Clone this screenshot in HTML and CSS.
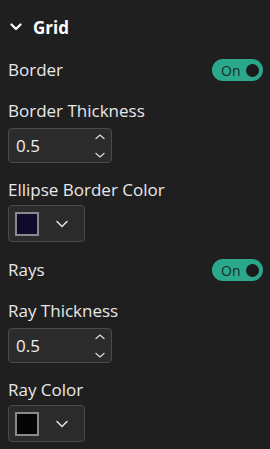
FILE: index.html
```html
<!DOCTYPE html>
<html lang="en">
<head>
    <meta charset="UTF-8">
    <meta name="viewport" content="width=device-width, initial-scale=1.0">
    <title>Grid Settings</title>
    <link rel="stylesheet" href="styles.css">
</head>
<body>

<div id="panel">
    <div class="header">
        <svg class="chevron" width="12" height="8" viewBox="0 0 12 8">
            <path d="M1.5 1.5 L6 6 L10.5 1.5" fill="none" stroke="#fff" stroke-width="2.2" stroke-linecap="round" stroke-linejoin="round"/>
        </svg>
        <span>Grid</span>
    </div>

    <div class="row">
        <span class="label">Border</span>
        <div class="toggle"><span class="state">On</span><i class="knob"></i></div>
    </div>

    <div class="group">
        <div class="label">Border Thickness</div>
        <div class="number">
            <span>0.5</span>
            <svg class="spin" width="12" height="26" viewBox="0 0 12 26">
                <path d="M2 5.5 L6 2 L10 5.5" fill="none" stroke="#d8d8d8" stroke-width="1.3" stroke-linecap="round"/>
                <path d="M2 20.5 L6 24 L10 20.5" fill="none" stroke="#d8d8d8" stroke-width="1.3" stroke-linecap="round"/>
            </svg>
        </div>
    </div>

    <div class="group tight">
        <div class="label">Ellipse Border Color</div>
        <div class="color">
            <i class="swatch navy"></i>
            <svg class="drop" width="12" height="8" viewBox="0 0 12 8">
                <path d="M1 1.5 L6 6.5 L11 1.5" fill="none" stroke="#e8e8e8" stroke-width="1.5" stroke-linecap="round"/>
            </svg>
        </div>
    </div>

    <div class="row">
        <span class="label">Rays</span>
        <div class="toggle"><span class="state">On</span><i class="knob"></i></div>
    </div>

    <div class="group">
        <div class="label">Ray Thickness</div>
        <div class="number">
            <span>0.5</span>
            <svg class="spin" width="12" height="26" viewBox="0 0 12 26">
                <path d="M2 5.5 L6 2 L10 5.5" fill="none" stroke="#d8d8d8" stroke-width="1.3" stroke-linecap="round"/>
                <path d="M2 20.5 L6 24 L10 20.5" fill="none" stroke="#d8d8d8" stroke-width="1.3" stroke-linecap="round"/>
            </svg>
        </div>
    </div>

    <div class="group tight">
        <div class="label">Ray Color</div>
        <div class="color">
            <i class="swatch black"></i>
            <svg class="drop" width="12" height="8" viewBox="0 0 12 8">
                <path d="M1 1.5 L6 6.5 L11 1.5" fill="none" stroke="#e8e8e8" stroke-width="1.5" stroke-linecap="round"/>
            </svg>
        </div>
    </div>
</div>

</body>
</html>
```

FILE: styles.css
```css
body {
    margin: 0;
    background-color: #1f1f1f;
    color: #e8e8e8;
    font-family: 'Open Sans', sans-serif;
    font-size: 17px;
}

#panel {
    display: flex;
    flex-direction: column;
    padding: 12px 7px 0 8px;
}

.header {
    display: flex;
    align-items: center;
    height: 30px;
    gap: 11px;
    padding-left: 2px;
    font-size: 17px;
    font-weight: 700;
    color: #fff;
}

.row {
    display: flex;
    align-items: center;
    justify-content: space-between;
    height: 22px;
    margin-top: 17px;
}

.label {
    line-height: 22px;
}

.group {
    display: flex;
    flex-direction: column;
    align-items: flex-start;
    gap: 6px;
    margin-top: 19px;
}

.group.tight {
    gap: 4px;
    margin-top: 16px;
}

.toggle {
    display: flex;
    align-items: center;
    justify-content: space-between;
    box-sizing: border-box;
    width: 51px;
    height: 22px;
    padding: 0 4px 0 9px;
    border-radius: 11px;
    background-color: #2ba88b;
}

.toggle .state {
    color: #17302a;
    font-size: 14px;
}

.knob {
    width: 13px;
    height: 13px;
    border-radius: 50%;
    background-color: #1b1b1b;
}

.number {
    display: flex;
    align-items: center;
    justify-content: space-between;
    box-sizing: border-box;
    width: 104px;
    height: 35px;
    padding: 0 5px 0 7px;
    background-color: #2b2b2b;
    border: 1px solid #4a4a4a;
    border-radius: 4px;
    color: #f0f0f0;
}

.color {
    display: flex;
    align-items: center;
    box-sizing: border-box;
    width: 77px;
    height: 37px;
    padding: 0 6px;
    background-color: #2b2b2b;
    border: 1px solid #4a4a4a;
    border-radius: 4px;
}

.swatch {
    box-sizing: border-box;
    width: 24px;
    height: 24px;
    border: 2px solid #8a8a8a;
}

.swatch.navy {
    background-color: #120a2c;
}

.swatch.black {
    background-color: #050505;
}

.drop {
    margin-left: 17px;
}
```
